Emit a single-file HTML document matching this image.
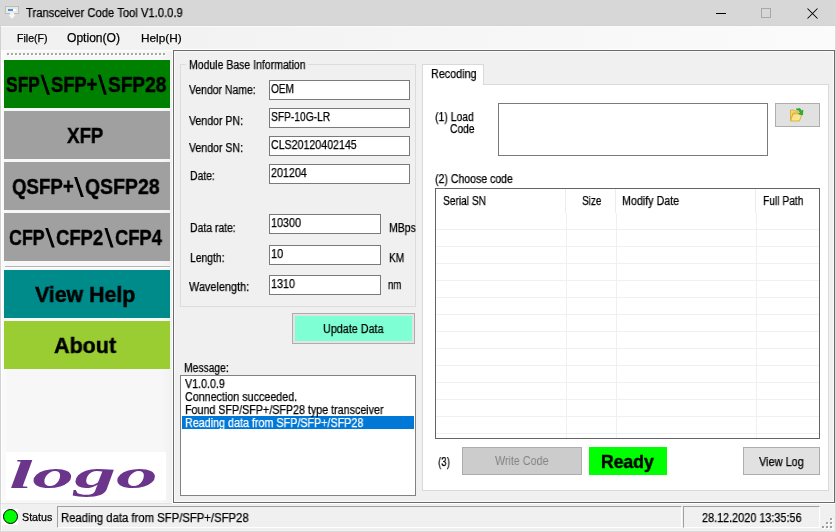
<!DOCTYPE html>
<html><head><meta charset="utf-8"><style>
*{margin:0;padding:0;box-sizing:border-box}
html,body{width:836px;height:532px;overflow:hidden;background:#f0f0f0;font-family:"Liberation Sans",sans-serif;color:#000}
.t{position:absolute;white-space:nowrap;will-change:transform;-webkit-text-stroke:0.25px currentColor}
.r{position:absolute}
</style></head>
<body>
<div class="r" style="left:0px;top:0px;width:836px;height:26px;background:#d7d7d7"></div>
<div class="r" style="left:0px;top:25px;width:836px;height:1px;background:#d3d3d3"></div>
<svg class="r" style="left:0px;top:0px" width="24" height="24" viewBox="0 0 24 24">
<rect x="5.5" y="6.5" width="13" height="7" fill="#e9ebe5" stroke="#bdbdbd" stroke-width="1"/>
<rect x="6.5" y="7.5" width="11" height="1" fill="#dfe3d6"/>
<rect x="8" y="9" width="5" height="2" fill="#4f8fdf"/>
<rect x="13" y="9" width="3" height="2" fill="#ffffff"/>
<rect x="10" y="13" width="4" height="3" fill="#f4f4f4"/>
<path d="M8.5 15 L15.5 15 L12 19 Z" fill="#f6f6f6"/>
<path d="M7 19 L17 19 L16 20 L8 20 Z" fill="#d2d2d2" opacity="0.6"/>
</svg>
<div class="t" style="left:25.70px;top:6.00px;font-size:12px;line-height:15px;transform:scaleX(0.9363);transform-origin:0 0;">Transceiver Code Tool V1.0.0.9</div>
<div class="r" style="left:716px;top:13px;width:10px;height:1px;background:#000"></div>
<div class="r" style="left:761px;top:8px;width:10px;height:10px;border:1px solid #a8a8a8"></div>
<svg class="r" style="left:806.5px;top:7.5px" width="12" height="12" viewBox="0 0 12 12"><path d="M0.5 0.5 L10.5 10.5 M10.5 0.5 L0.5 10.5" stroke="#000" stroke-width="1.05"/></svg>
<div class="r" style="left:0px;top:26px;width:836px;height:24px;background:linear-gradient(to right,#f0f0f0,#fbfbfb)"></div>
<div class="r" style="left:0px;top:26px;width:836px;height:1px;background:#fbfbfb"></div>
<div class="r" style="left:0px;top:26px;width:1px;height:477px;background:#d2d2d2"></div>
<div class="r" style="left:0px;top:503px;width:1px;height:29px;background:#d6d6d6"></div>
<div class="t" style="left:16.70px;top:32.14px;font-size:10.55px;line-height:13px;letter-spacing:0.002px;">File(F)</div>
<div class="t" style="left:67.40px;top:30.62px;font-size:12.07px;line-height:15px;letter-spacing:0.002px;">Option(O)</div>
<div class="t" style="left:140.70px;top:30.71px;font-size:11.81px;line-height:15px;letter-spacing:0.002px;">Help(H)</div>
<div class="r" style="left:1px;top:50px;width:172px;height:453px;background:linear-gradient(to right,#fafafa 0,#fafafa 5px,#f7f7f7 5px,#f7f7f7 160px,#f1f1f1 171px)"></div>
<div class="r" style="left:1px;top:503px;width:172px;height:1px;background:#e3e3e3"></div>
<div class="r" style="left:1px;top:50px;width:1px;height:453px;background:#ffffff"></div>
<div class="r" style="left:2px;top:50px;width:170px;height:1px;background:#ffffff;border-top-left-radius:2px"></div>
<div class="r" style="left:8px;top:54px;width:158px;height:2px;background:repeating-linear-gradient(to right,#ffffff 0 2px,transparent 2px 4px)"></div>
<div class="r" style="left:7px;top:53px;width:158px;height:2px;background:repeating-linear-gradient(to right,#a8a8a8 0 2px,transparent 2px 4px)"></div>
<div class="r" style="left:4px;top:60px;width:166px;height:48px;background:#008000"></div>
<div class="r" style="left:4px;top:111px;width:166px;height:48px;background:#a0a0a0"></div>
<div class="r" style="left:4px;top:162px;width:166px;height:48px;background:#a0a0a0"></div>
<div class="r" style="left:4px;top:213px;width:166px;height:48px;background:#a0a0a0"></div>
<div class="t" style="left:5.90px;top:70.88px;font-size:22px;line-height:28px;transform:scaleX(0.7922);transform-origin:0 0;font-weight:bold;-webkit-text-stroke:0.45px #000;">SFP</div>
<svg class="r" style="left:0;top:0;overflow:visible" width="1" height="1"><polygon points="40.4,74.8 43.3,74.8 50,94.8 47.1,94.8" fill="#000"/></svg>
<div class="t" style="left:50.60px;top:70.88px;font-size:22px;line-height:28px;transform:scaleX(0.8336);transform-origin:0 0;font-weight:bold;-webkit-text-stroke:0.45px #000;">SFP+</div>
<svg class="r" style="left:0;top:0;overflow:visible" width="1" height="1"><polygon points="97.8,74.8 100.7,74.8 106.9,94.8 104.0,94.8" fill="#000"/></svg>
<div class="t" style="left:107.80px;top:70.88px;font-size:22px;line-height:28px;transform:scaleX(0.8674);transform-origin:0 0;font-weight:bold;-webkit-text-stroke:0.45px #000;">SFP28</div>
<div class="t" style="left:66.90px;top:121.88px;font-size:22px;line-height:28px;transform:scaleX(0.8483);transform-origin:0 0;font-weight:bold;-webkit-text-stroke:0.45px #000;">XFP</div>
<div class="t" style="left:11.90px;top:172.78px;font-size:22px;line-height:28px;transform:scaleX(0.8486);transform-origin:0 0;font-weight:bold;-webkit-text-stroke:0.45px #000;">QSFP+</div>
<svg class="r" style="left:0;top:0;overflow:visible" width="1" height="1"><polygon points="74.1,177.1 77.0,177.1 83.8,196.9 80.89999999999999,196.9" fill="#000"/></svg>
<div class="t" style="left:84.60px;top:172.78px;font-size:22px;line-height:28px;transform:scaleX(0.8830);transform-origin:0 0;font-weight:bold;-webkit-text-stroke:0.45px #000;">QSFP28</div>
<div class="t" style="left:9.10px;top:223.78px;font-size:22px;line-height:28px;transform:scaleX(0.8091);transform-origin:0 0;font-weight:bold;-webkit-text-stroke:0.45px #000;">CFP</div>
<svg class="r" style="left:0;top:0;overflow:visible" width="1" height="1"><polygon points="45.2,227.9 48.1,227.9 54.8,247.5 51.9,247.5" fill="#000"/></svg>
<div class="t" style="left:55.80px;top:223.78px;font-size:22px;line-height:28px;transform:scaleX(0.8379);transform-origin:0 0;font-weight:bold;-webkit-text-stroke:0.45px #000;">CFP2</div>
<svg class="r" style="left:0;top:0;overflow:visible" width="1" height="1"><polygon points="104.4,227.9 107.30000000000001,227.9 113.6,247.5 110.69999999999999,247.5" fill="#000"/></svg>
<div class="t" style="left:115.10px;top:223.78px;font-size:22px;line-height:28px;transform:scaleX(0.8326);transform-origin:0 0;font-weight:bold;-webkit-text-stroke:0.45px #000;">CFP4</div>
<div class="r" style="left:5px;top:266px;width:165px;height:1px;background:#b4b4b4"></div>
<div class="r" style="left:5px;top:267px;width:165px;height:1px;background:#ffffff"></div>
<div class="r" style="left:4px;top:270px;width:166px;height:48px;background:#008b8b"></div>
<div class="t" style="left:35.20px;top:280.88px;font-size:22px;line-height:28px;transform:scaleX(0.9690);transform-origin:0 0;font-weight:bold;-webkit-text-stroke:0.45px #000;">View Help</div>
<div class="r" style="left:4px;top:321px;width:166px;height:48px;background:#9acd32"></div>
<div class="t" style="left:54.10px;top:331.88px;font-size:22px;line-height:28px;transform:scaleX(0.9767);transform-origin:0 0;font-weight:bold;-webkit-text-stroke:0.45px #000;">About</div>
<div class="r" style="left:6px;top:452px;width:160px;height:48px;background:#fff"></div>
<svg class="r" style="left:6px;top:452px" width="160" height="48" viewBox="0 0 160 48">
<text x="1.5" y="36.5" font-family="Liberation Serif" font-weight="bold" font-style="italic" font-size="40" fill="#6c358c" transform="scale(2.09,1)">logo</text>
</svg>
<div class="r" style="left:172px;top:49px;width:663px;height:455px;border:1px solid #ffffff"></div>
<div class="r" style="left:173px;top:50px;width:662px;height:453px;border:1px solid #6a6a6a;background:#f0f0f0"></div>
<div class="r" style="left:174px;top:51px;width:660px;height:451px;border:1px solid #fafafa"></div>
<div class="r" style="left:180px;top:64px;width:236px;height:243px;border:1px solid #dcdcdc"></div>
<div class="r" style="left:186px;top:60px;width:122px;height:10px;background:#f0f0f0"></div>
<div class="t" style="left:189.30px;top:58.00px;font-size:12px;line-height:15px;transform:scaleX(0.8738);transform-origin:0 0;">Module Base Information</div>
<div class="t" style="left:189.30px;top:83.00px;font-size:12px;line-height:15px;transform:scaleX(0.8692);transform-origin:0 0;">Vendor Name:</div>
<div class="t" style="left:189.20px;top:114.00px;font-size:12px;line-height:15px;transform:scaleX(0.8814);transform-origin:0 0;">Vendor PN:</div>
<div class="t" style="left:189.20px;top:141.00px;font-size:12px;line-height:15px;transform:scaleX(0.8814);transform-origin:0 0;">Vendor SN:</div>
<div class="t" style="left:189.50px;top:169.00px;font-size:12px;line-height:15px;transform:scaleX(0.8647);transform-origin:0 0;">Date:</div>
<div class="t" style="left:189.70px;top:221.00px;font-size:12px;line-height:15px;transform:scaleX(0.8675);transform-origin:0 0;">Data rate:</div>
<div class="t" style="left:189.70px;top:251.00px;font-size:12px;line-height:15px;transform:scaleX(0.8621);transform-origin:0 0;">Length:</div>
<div class="t" style="left:189.20px;top:280.00px;font-size:12px;line-height:15px;transform:scaleX(0.9073);transform-origin:0 0;">Wavelength:</div>
<div class="r" style="left:269px;top:80px;width:141px;height:20px;background:#fff;border:1px solid #7a7a7a"></div>
<div class="t" style="left:271.30px;top:82.00px;font-size:12px;line-height:15px;transform:scaleX(0.8406);transform-origin:0 0;">OEM</div>
<div class="r" style="left:269px;top:108px;width:141px;height:20px;background:#fff;border:1px solid #7a7a7a"></div>
<div class="t" style="left:271.30px;top:110.00px;font-size:12px;line-height:15px;transform:scaleX(0.8521);transform-origin:0 0;">SFP-10G-LR</div>
<div class="r" style="left:269px;top:136px;width:141px;height:20px;background:#fff;border:1px solid #7a7a7a"></div>
<div class="t" style="left:271.30px;top:138.00px;font-size:12px;line-height:15px;transform:scaleX(0.8855);transform-origin:0 0;">CLS20120402145</div>
<div class="r" style="left:269px;top:164px;width:141px;height:20px;background:#fff;border:1px solid #7a7a7a"></div>
<div class="t" style="left:271.30px;top:166.00px;font-size:12px;line-height:15px;transform:scaleX(0.8946);transform-origin:0 0;">201204</div>
<div class="r" style="left:269px;top:214px;width:112px;height:20px;background:#fff;border:1px solid #7a7a7a"></div>
<div class="t" style="left:271.30px;top:216.00px;font-size:12px;line-height:15px;transform:scaleX(0.8993);transform-origin:0 0;">10300</div>
<div class="r" style="left:269px;top:245px;width:112px;height:20px;background:#fff;border:1px solid #7a7a7a"></div>
<div class="t" style="left:271.30px;top:247.00px;font-size:12px;line-height:15px;transform:scaleX(0.9084);transform-origin:0 0;">10</div>
<div class="r" style="left:269px;top:275px;width:112px;height:20px;background:#fff;border:1px solid #7a7a7a"></div>
<div class="t" style="left:271.30px;top:277.00px;font-size:12px;line-height:15px;transform:scaleX(0.8989);transform-origin:0 0;">1310</div>
<div class="t" style="left:388.60px;top:221.00px;font-size:12px;line-height:15px;transform:scaleX(0.8708);transform-origin:0 0;">MBps</div>
<div class="t" style="left:388.60px;top:251.00px;font-size:12px;line-height:15px;transform:scaleX(0.8444);transform-origin:0 0;">KM</div>
<div class="t" style="left:387.80px;top:278.00px;font-size:12px;line-height:15px;transform:scaleX(0.7914);transform-origin:0 0;">nm</div>
<div class="r" style="left:292px;top:313px;width:123px;height:31px;background:#e4e4e4;border:1px solid #adadad"></div>
<div class="r" style="left:294px;top:315px;width:119px;height:27px;background:#e8dfe0"></div>
<div class="r" style="left:295px;top:316px;width:117px;height:25px;background:#7fffd4"></div>
<div class="t" style="left:322.70px;top:322.00px;font-size:12px;line-height:15px;transform:scaleX(0.8986);transform-origin:0 0;">Update Data</div>
<div class="t" style="left:183.70px;top:361.00px;font-size:12px;line-height:15px;transform:scaleX(0.8593);transform-origin:0 0;">Message:</div>
<div class="r" style="left:180px;top:375px;width:236px;height:121px;background:#fff;border:1px solid #828282"></div>
<div class="r" style="left:182px;top:416px;width:232px;height:13px;background:#0078d7"></div>
<div class="t" style="left:184.50px;top:377.00px;font-size:12px;line-height:15px;transform:scaleX(0.8926);transform-origin:0 0;">V1.0.0.9</div>
<div class="t" style="left:184.50px;top:390.00px;font-size:12px;line-height:15px;transform:scaleX(0.8939);transform-origin:0 0;">Connection succeeded.</div>
<div class="t" style="left:184.50px;top:403.00px;font-size:12px;line-height:15px;transform:scaleX(0.8925);transform-origin:0 0;">Found SFP/SFP+/SFP28 type transceiver</div>
<div class="t" style="left:184.50px;top:416.00px;font-size:12px;line-height:15px;transform:scaleX(0.8956);transform-origin:0 0;color:#fff;">Reading data from SFP/SFP+/SFP28</div>
<div class="r" style="left:422px;top:84px;width:407px;height:407px;background:#fff;border:1px solid #d9d9d9"></div>
<div class="r" style="left:422px;top:64px;width:62px;height:21px;background:#fff;border:1px solid #d9d9d9;border-bottom:none"></div>
<div class="t" style="left:430.60px;top:67.00px;font-size:12px;line-height:15px;transform:scaleX(0.8994);transform-origin:0 0;">Recoding</div>
<div class="t" style="left:435.30px;top:110.00px;font-size:12px;line-height:15px;transform:scaleX(0.8702);transform-origin:0 0;">(1) Load</div>
<div class="t" style="left:449.70px;top:122.00px;font-size:12px;line-height:15px;transform:scaleX(0.8543);transform-origin:0 0;">Code</div>
<div class="r" style="left:498px;top:103px;width:270px;height:53px;background:#fff;border:1px solid #7a7a7a"></div>
<div class="r" style="left:775px;top:103px;width:45px;height:24px;background:#e1e1e1;border:1px solid #adadad"></div>
<svg class="r" style="left:789px;top:107px" width="16" height="16" viewBox="0 0 16 16">
<path d="M1.5 3 L5 3 L6 4 L9 4 L9 6 L4 6 L1.5 14 Z" fill="#f0d77a" stroke="#d9a820" stroke-width="0.8"/>
<path d="M4 7 L13 6.5 L10.5 14 L1.5 14 Z" fill="#fbe58e" stroke="#d9a820" stroke-width="0.8"/>
<path d="M7 2 L11 1.5 L12.5 4 L14 3 L13.5 8 L9.5 7 L11 5.5 L10 3.5 Z" fill="#2fb030" stroke="#138a14" stroke-width="0.5"/>
</svg>
<div class="t" style="left:435.40px;top:172.00px;font-size:12px;line-height:15px;transform:scaleX(0.8778);transform-origin:0 0;">(2) Choose code</div>
<div class="r" style="left:435px;top:188px;width:385px;height:251px;background:#fff;border:1px solid #646464"></div>
<div class="r" style="left:436px;top:229px;width:383px;height:1px;background:#f0f0f0"></div>
<div class="r" style="left:436px;top:246px;width:383px;height:1px;background:#f0f0f0"></div>
<div class="r" style="left:436px;top:263px;width:383px;height:1px;background:#f0f0f0"></div>
<div class="r" style="left:436px;top:280px;width:383px;height:1px;background:#f0f0f0"></div>
<div class="r" style="left:436px;top:297px;width:383px;height:1px;background:#f0f0f0"></div>
<div class="r" style="left:436px;top:314px;width:383px;height:1px;background:#f0f0f0"></div>
<div class="r" style="left:436px;top:331px;width:383px;height:1px;background:#f0f0f0"></div>
<div class="r" style="left:436px;top:348px;width:383px;height:1px;background:#f0f0f0"></div>
<div class="r" style="left:436px;top:365px;width:383px;height:1px;background:#f0f0f0"></div>
<div class="r" style="left:436px;top:382px;width:383px;height:1px;background:#f0f0f0"></div>
<div class="r" style="left:436px;top:399px;width:383px;height:1px;background:#f0f0f0"></div>
<div class="r" style="left:436px;top:416px;width:383px;height:1px;background:#f0f0f0"></div>
<div class="r" style="left:436px;top:433px;width:383px;height:1px;background:#f0f0f0"></div>
<div class="r" style="left:566px;top:213px;width:1px;height:225px;background:#f0f0f0"></div>
<div class="r" style="left:565px;top:189px;width:1px;height:24px;background:#ececec"></div>
<div class="r" style="left:616px;top:213px;width:1px;height:225px;background:#f0f0f0"></div>
<div class="r" style="left:615px;top:189px;width:1px;height:24px;background:#ececec"></div>
<div class="r" style="left:756px;top:213px;width:1px;height:225px;background:#f0f0f0"></div>
<div class="r" style="left:755px;top:189px;width:1px;height:24px;background:#ececec"></div>
<div class="t" style="left:442.70px;top:194.00px;font-size:12px;line-height:15px;transform:scaleX(0.8481);transform-origin:0 0;">Serial SN</div>
<div class="t" style="left:581.80px;top:194.00px;font-size:12px;line-height:15px;transform:scaleX(0.8312);transform-origin:0 0;">Size</div>
<div class="t" style="left:622.40px;top:194.00px;font-size:12px;line-height:15px;transform:scaleX(0.8935);transform-origin:0 0;">Modify Date</div>
<div class="t" style="left:762.70px;top:194.00px;font-size:12px;line-height:15px;transform:scaleX(0.8534);transform-origin:0 0;">Full Path</div>
<div class="t" style="left:437.50px;top:455.00px;font-size:12px;line-height:15px;transform:scaleX(0.8128);transform-origin:0 0;">(3)</div>
<div class="r" style="left:462px;top:447px;width:120px;height:28px;background:#cccccc;border:1px solid #adadad"></div>
<div class="t" style="left:494.70px;top:454.00px;font-size:12px;line-height:15px;transform:scaleX(0.8943);transform-origin:0 0;color:#838383;;-webkit-text-stroke:0">Write Code</div>
<div class="r" style="left:589px;top:447px;width:78px;height:28px;background:#00ff00"></div>
<div class="t" style="left:601.00px;top:450.96px;font-size:18px;line-height:22px;transform:scaleX(0.9759);transform-origin:0 0;font-weight:bold;-webkit-text-stroke:0.45px #000;">Ready</div>
<div class="r" style="left:743px;top:447px;width:77px;height:28px;background:#e1e1e1;border:1px solid #adadad"></div>
<div class="t" style="left:758.80px;top:455.00px;font-size:12px;line-height:15px;transform:scaleX(0.9096);transform-origin:0 0;">View Log</div>
<div class="r" style="left:2px;top:509px;width:16px;height:16px;background:#fff"></div>
<div class="r" style="left:3px;top:509px;width:15px;height:15px;background:#00ff00;border:1.6px solid #000;border-radius:50%"></div>
<div class="t" style="left:21.80px;top:511.30px;font-size:10.69px;line-height:13px;letter-spacing:-0.001px;">Status</div>
<div class="r" style="left:57px;top:506px;width:625px;height:22px;border-top:1px solid #a0a0a0;border-left:1px solid #a0a0a0;border-right:1px solid #fff;border-bottom:1px solid #fff"></div>
<div class="t" style="left:60.60px;top:511.00px;font-size:12px;line-height:15px;transform:scaleX(0.9423);transform-origin:0 0;">Reading data from SFP/SFP+/SFP28</div>
<div class="r" style="left:683px;top:506px;width:137px;height:22px;border-top:1px solid #a0a0a0;border-left:1px solid #a0a0a0;border-right:1px solid #fff;border-bottom:1px solid #fff"></div>
<div class="t" style="left:702.20px;top:511.00px;font-size:12px;line-height:15px;transform:scaleX(0.9037);transform-origin:0 0;">28.12.2020 13:35:56</div>
<div class="r" style="left:831px;top:519px;width:2px;height:2px;background:#ffffff"></div>
<div class="r" style="left:827px;top:523px;width:2px;height:2px;background:#ffffff"></div>
<div class="r" style="left:831px;top:523px;width:2px;height:2px;background:#ffffff"></div>
<div class="r" style="left:823px;top:527px;width:2px;height:2px;background:#ffffff"></div>
<div class="r" style="left:827px;top:527px;width:2px;height:2px;background:#ffffff"></div>
<div class="r" style="left:831px;top:527px;width:2px;height:2px;background:#ffffff"></div>
<div class="r" style="left:830px;top:518px;width:2px;height:2px;background:#a0a0a0"></div>
<div class="r" style="left:826px;top:522px;width:2px;height:2px;background:#a0a0a0"></div>
<div class="r" style="left:830px;top:522px;width:2px;height:2px;background:#a0a0a0"></div>
<div class="r" style="left:822px;top:526px;width:2px;height:2px;background:#a0a0a0"></div>
<div class="r" style="left:826px;top:526px;width:2px;height:2px;background:#a0a0a0"></div>
<div class="r" style="left:830px;top:526px;width:2px;height:2px;background:#a0a0a0"></div>
<div class="r" style="left:835px;top:26px;width:1px;height:506px;background:#dcdcdc"></div>
<div class="r" style="left:0px;top:531px;width:836px;height:1px;background:#dcdcdc"></div>
<div class="r" style="left:1px;top:504px;width:1px;height:27px;background:#fafafa"></div>

</body></html>
